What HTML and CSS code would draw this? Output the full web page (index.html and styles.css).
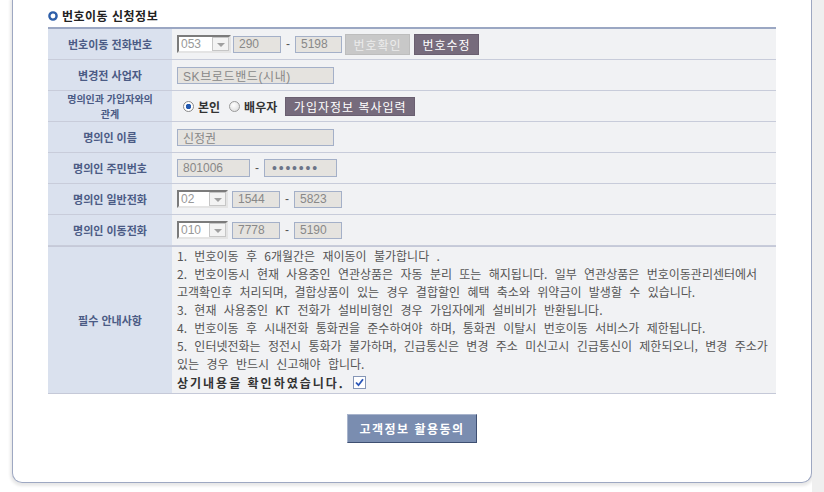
FILE: index.html
```html
<!DOCTYPE html>
<html lang="ko">
<head>
    <meta charset="UTF-8" />
    <title>번호이동 신청정보</title>
    <link rel="stylesheet" href="styles.css">
</head>
<body>
    <div class="page">
        <div class="panel">
            <h3 class="sec-title">
                <svg class="bullet" width="10" height="10" viewBox="0 0 10 10"><circle cx="5" cy="5" r="3.6" fill="none" stroke="#2e5fa9" stroke-width="2.4"/></svg>
                번호이동 신청정보
            </h3>

            <div class="form-table">
                <div class="row">
                    <div class="th">번호이동 전화번호</div>
                    <div class="td">
                        <div class="sel w54"><span class="sel-val">053</span><span class="sel-btn"></span></div>
                        <span class="inp w48 ml2">290</span>
                        <span class="dash">-</span>
                        <span class="inp w47">5198</span>
                        <button class="btn btn-off">번호확인</button>
                        <button class="btn btn-dark ml4">번호수정</button>
                    </div>
                </div>
                <div class="row">
                    <div class="th">변경전 사업자</div>
                    <div class="td">
                        <span class="inp w157 wide-text">SK브로드밴드(시내)</span>
                    </div>
                </div>
                <div class="row">
                    <div class="th two-line">명의인과 가입자와의<br>관계</div>
                    <div class="td">
                        <span class="radio on"></span><label class="radio-label">본인</label>
                        <span class="radio"></span><label class="radio-label">배우자</label>
                        <button class="btn btn-dark btn-copy">가입자정보 복사입력</button>
                    </div>
                </div>
                <div class="row">
                    <div class="th">명의인 이름</div>
                    <div class="td">
                        <span class="inp w157">신정권</span>
                    </div>
                </div>
                <div class="row">
                    <div class="th">명의인 주민번호</div>
                    <div class="td">
                        <span class="inp w73 tall">801006</span>
                        <span class="dash">-</span>
                        <span class="inp w73 tall dots">•••••••</span>
                    </div>
                </div>
                <div class="row">
                    <div class="th">명의인 일반전화</div>
                    <div class="td">
                        <div class="sel w51"><span class="sel-val">02</span><span class="sel-btn"></span></div>
                        <span class="inp w48 ml4">1544</span>
                        <span class="dash">-</span>
                        <span class="inp w48">5823</span>
                    </div>
                </div>
                <div class="row">
                    <div class="th">명의인 이동전화</div>
                    <div class="td">
                        <div class="sel w51"><span class="sel-val">010</span><span class="sel-btn"></span></div>
                        <span class="inp w48 ml4">7778</span>
                        <span class="dash">-</span>
                        <span class="inp w48">5190</span>
                    </div>
                </div>
                <div class="row row-info">
                    <div class="th th-info">필수 안내사항</div>
                    <div class="td td-info">
                        <p class="notice">
                            1. 번호이동 후 6개월간은 재이동이 불가합니다 .<br>
                            2. 번호이동시 현재 사용중인 연관상품은 자동 분리 또는 해지됩니다. 일부 연관상품은 번호이동관리센터에서<br>
                            고객확인후 처리되며, 결합상품이 있는 경우 결합할인 혜택 축소와 위약금이 발생할 수 있습니다.<br>
                            3. 현재 사용중인 KT 전화가 설비비형인 경우 가입자에게 설비비가 반환됩니다.<br>
                            4. 번호이동 후 시내전화 통화권을 준수하여야 하며, 통화권 이탈시 번호이동 서비스가 제한됩니다.<br>
                            5. 인터넷전화는 정전시 통화가 불가하며, 긴급통신은 변경 주소 미신고시 긴급통신이 제한되오니, 변경 주소가<br>
                            있는 경우 반드시 신고해야 합니다.
                        </p>
                        <div class="agree">
                            <strong>상기내용을 확인하였습니다.</strong>
                            <span class="chk">
                                <svg width="9" height="9" viewBox="0 0 9 9"><path d="M1 4.5 L3.5 7.2 L8 1.2" fill="none" stroke="#2a56b8" stroke-width="1.8"/></svg>
                            </span>
                        </div>
                    </div>
                </div>
            </div>

            <div class="btn-area">
                <button class="btn-main">고객정보 활용동의</button>
            </div>
        </div>
        <div class="page-side"></div>
    </div>
</body>
</html>
```

FILE: styles.css
```css
body {
    margin: 0;
    font-family: "Noto Sans CJK KR", sans-serif;
    font-size: 12px;
    background: #fff;
}

.page {
    display: flex;
    min-height: 100vh;
    align-items: flex-start;
}

.panel {
    margin-left: 12px;
    width: 800px;
    box-sizing: border-box;
    background: #fff;
    border: 1px solid #9ea8c2;
    border-top: none;
    border-radius: 0 0 10px 10px;
    padding: 5px 35px 39px 35px;
    box-shadow: 0 1px 3px 2px #e8e8e8;
}

.page-side {
    flex: 1;
    align-self: stretch;
    background: #efefef;
}

.sec-title {
    display: flex;
    align-items: center;
    gap: 4px;
    margin: 0 0 2px 0;
    height: 20px;
    font-size: 12px;
    font-weight: bold;
    letter-spacing: 0.5px;
    color: #222;
}

    .sec-title .bullet {
        margin-top: 1px;
    }

.form-table {
    border-top: 2px solid #9ba7c3;
    border-bottom: 1px solid #c5c9d8;
}

.row {
    display: flex;
    border-bottom: 1px solid #c8ccda;
}

    .row:last-child {
        border-bottom: none;
        border-top: 1px solid #c5c9d8;
    }

.th {
    width: 124px;
    flex-shrink: 0;
    height: 30px;
    display: flex;
    align-items: center;
    justify-content: center;
    text-align: center;
    background: #dae1ee;
    color: #4b5b85;
    font-size: 11px;
    font-weight: bold;
    line-height: 14px;
}

    .th.two-line {
        font-size: 10px;
        line-height: 15px;
    }

.td {
    flex: 1;
    display: flex;
    align-items: center;
    padding-left: 5px;
    background: #f1f2f4;
    color: #555;
}

.th-info {
    height: 146px;
}

.td-info {
    display: block;
}

.notice {
    margin: 0;
    line-height: 18px;
    word-spacing: 4px;
    white-space: nowrap;
    color: #555;
}

.agree {
    display: flex;
    align-items: center;
    height: 18px;
}

    .agree strong {
        color: #333;
        letter-spacing: 2px;
    }

.chk {
    display: inline-flex;
    align-items: center;
    justify-content: center;
    width: 11px;
    height: 11px;
    margin-left: 8px;
    border: 1px solid #8596b6;
    background: #fff;
}

.inp {
    display: inline-flex;
    align-items: center;
    box-sizing: border-box;
    height: 17px;
    padding-left: 5px;
    background: #e5e3df;
    border: 1px solid #a4b0c8;
    color: #888;
    font-family: "Liberation Sans", "Noto Sans CJK KR", sans-serif;
    font-size: 12px;
}

    .inp.tall {
        height: 18px;
    }

    .inp.dots {
        font-size: 14px;
        letter-spacing: 1.8px;
        color: #6b7488;
        padding-left: 7px;
    }

.wide-text {
    letter-spacing: 0.6px;
}

.w47 { width: 47px; }
.w48 { width: 48px; }
.w51 { width: 51px; }
.w54 { width: 54px; }
.w73 { width: 73px; }
.w157 { width: 157px; }
.ml2 { margin-left: 2px; }
.ml4 { margin-left: 4px; }

.dash {
    width: 14px;
    text-align: center;
    color: #555;
    font-family: "Liberation Sans", sans-serif;
}

.sel {
    display: flex;
    align-items: center;
    justify-content: space-between;
    box-sizing: border-box;
    height: 18px;
    background: #fff;
    border: 2px solid #fff;
    border-top-color: #7b7b7b;
    border-left-color: #7b7b7b;
    border-right-color: #e4e4e4;
    border-bottom-color: #e4e4e4;
    padding-left: 2px;
    color: #999;
    font-family: "Liberation Sans", sans-serif;
    font-size: 12px;
}

.sel-btn {
    position: relative;
    width: 17px;
    height: 14px;
    box-sizing: border-box;
    border: 1px solid #c6c6c6;
    background: #f3f3f3;
}

    .sel-btn::after {
        content: "";
        position: absolute;
        left: 4px;
        top: 5px;
        border-left: 4px solid transparent;
        border-right: 4px solid transparent;
        border-top: 4px solid #a0a0a0;
    }

.btn {
    height: 21px;
    width: 65px;
    padding: 0;
    border: 1px solid #6a5f70;
    font-family: "Noto Sans CJK KR", sans-serif;
    font-size: 12px;
    letter-spacing: 1px;
    cursor: pointer;
}

.btn-off {
    margin-left: 3px;
    background: #c8c8c8;
    border-color: #bdbdbd;
    color: #ececec;
}

.btn-dark {
    background: #766b7c;
    color: #fff;
}

.btn-copy {
    width: 130px;
    height: 19px;
    margin-left: 5px;
}

.radio {
    box-sizing: border-box;
    width: 11px;
    height: 11px;
    border-radius: 50%;
    border: 1px solid #9a9a9a;
    background: radial-gradient(circle at 40% 35%, #fff, #d8d8d8);
    margin-left: 6px;
}

    .radio.on {
        background: radial-gradient(circle, #2158b0 0 2.5px, #fff 3px);
        border-color: #888;
    }

.radio-label {
    margin-left: 4px;
    margin-right: 3px;
    font-weight: bold;
    color: #333;
    font-size: 12px;
}

.btn-area {
    display: flex;
    justify-content: center;
    margin-top: 20px;
}

.btn-main {
    width: 130px;
    height: 29px;
    background: #7a8db0;
    border: 1px solid #a8b4cc;
    border-right-color: #3e4f71;
    border-bottom-color: #3e4f71;
    color: #fff;
    font-family: "Noto Sans CJK KR", sans-serif;
    font-size: 12px;
    font-weight: bold;
    letter-spacing: 1.5px;
    cursor: pointer;
}
```
